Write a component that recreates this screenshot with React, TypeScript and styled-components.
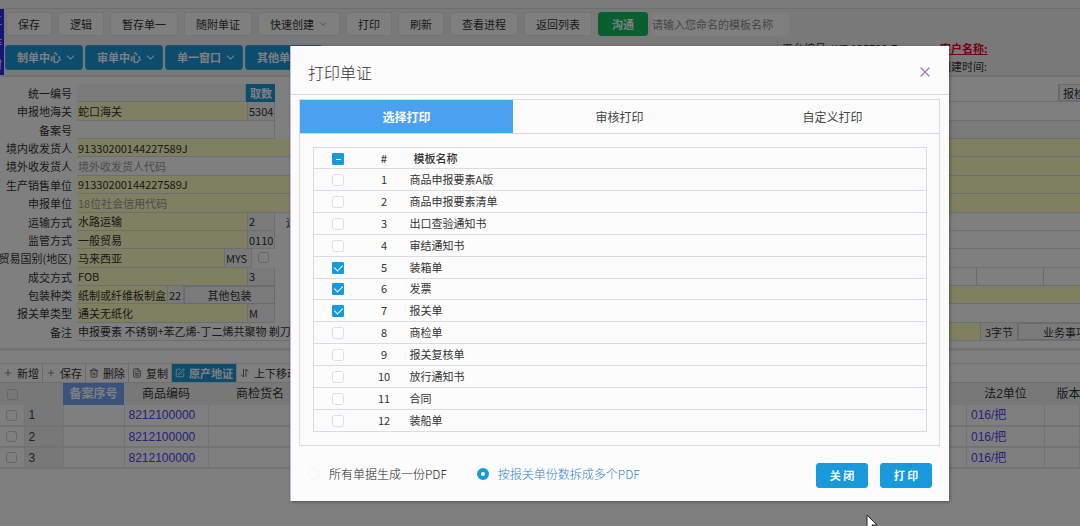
import React, { useEffect, useRef, useState } from "react";
import styled, { createGlobalStyle, css } from "styled-components";
import { ChevronDown, Plus, Trash2, FileText, SquarePen, X } from "lucide-react";

const GlobalStyle = createGlobalStyle`
  * { box-sizing: border-box; }
  body {
    margin: 0;
    overflow: hidden;
    background: #fff;
    color: #333;
    font: 11px/18px "Noto Sans CJK SC", sans-serif;
  }
  button, input {
    margin: 0;
    font: inherit;
    color: inherit;
    border-radius: 0;
  }
  button { cursor: pointer; }
`;

const Page = styled.div`
  position: relative;
  min-height: 100vh;
  overflow: hidden;
  background: #fff;
`;

/* ---------- header ---------- */

const TopStrip = styled.div`
  height: 9px;
  background: #f4f4f4;
  border-bottom: 1px solid #dcdcdc;
`;

const Header = styled.header`
  display: flex;
  height: 68px;
  background: #f2f2f2;
  border-bottom: 2px solid #e2e2e2;
`;

const SideTab = styled.nav`
  display: flex;
  flex-direction: column;
  align-items: flex-end;
  justify-content: space-around;
  flex: none;
  width: 4px;
  margin-right: 1px;
  overflow: hidden;
  padding-right: 2px;
  color: #fff;
  background: #2c2cf4;
`;

const HeaderRows = styled.div`
  flex: 1;
  min-width: 0;
`;

const ActionRow = styled.div`
  display: flex;
  align-items: center;
  gap: 6px;
  height: 30px;
  padding-left: 1px;
`;

const ActionButton = styled.button<{ $accent?: boolean }>`
  display: flex;
  align-items: center;
  gap: 4px;
  height: 24px;
  padding: 0 11px;
  border: 1px solid #e6e6e6;
  border-radius: 3px;
  background: #fff;
  white-space: nowrap;
  ${(p) =>
    p.$accent &&
    css`
      padding: 0 13px;
      margin-right: -3px;
      color: #fff;
      font-weight: 700;
      background: #13bf5e;
      border-color: #13bf5e;
    `}
`;

const TemplateInput = styled.input`
  width: 138px;
  height: 24px;
  padding: 0;
  border: 1px solid #f8f8f8;
  border-radius: 3px;
  background: #fff;
  &::placeholder { color: #8c8c8c; }
`;

const MenuRow = styled.div`
  display: flex;
  align-items: center;
  gap: 2px;
  height: 36px;
`;

const MenuButton = styled.button`
  display: flex;
  align-items: center;
  justify-content: center;
  gap: 3px;
  width: 78px;
  height: 25px;
  padding: 0 0 0 6px;
  border: 1px solid #3aa6e0;
  border-radius: 3px;
  color: #fff;
  font-weight: 700;
  background: #1899db;
`;

const OrderInfo = styled.dl`
  display: grid;
  grid-template-columns: 158px 1fr;
  width: 303px;
  height: 36px;
  margin: 0 0 0 auto;
  padding-left: 4px;
  border-left: 1px solid #d4d4d4;
`;

const InfoItem = styled.dt`
  white-space: nowrap;
`;

const CustomerLink = styled.a`
  color: #f00028;
  font-weight: 700;
`;

/* ---------- form ---------- */

const Form = styled.form`
  display: grid;
  grid-template-rows: repeat(14, 1fr);
  height: 274px;
  padding: 7px 0;
  border-bottom: 3px solid #e6e6e6;
`;

const FormRow = styled.div`
  display: grid;
  grid-template-columns: 77px 198px 1fr 131px;
  min-height: 0;
`;

const FieldLabel = styled.label`
  padding-right: 5px;
  text-align: right;
  white-space: nowrap;
  justify-self: end;
`;

const FieldGroup = styled.div<{ $wide?: boolean }>`
  display: flex;
  min-width: 0;
  overflow: hidden;
  grid-column: ${(p) => (p.$wide ? "2 / 4" : "auto")};
`;

type Tone = "yellow" | "gray" | "white";
const tones: Record<Tone, string> = { yellow: "#ffffc2", gray: "#f4f4f4", white: "#fff" };

const Field = styled.input<{ $tone: Tone; $width?: number }>`
  flex: ${(p) => (p.$width ? "none" : "1")};
  width: ${(p) => (p.$width ? `${p.$width}px` : "auto")};
  min-width: 0;
  height: 100%;
  padding: 0 1px;
  border: solid #dcdcdc;
  border-width: 0 1px 1px 0;
  background: ${(p) => tones[p.$tone]};
  &::placeholder { color: #999; }
`;

const FieldButton = styled.button<{ $primary?: boolean }>`
  flex: 1 0 auto;
  height: 100%;
  padding: 0 3px;
  border: 1px solid #c9d6e6;
  line-height: 16px;
  background: #f6f6f6;
  white-space: nowrap;
  ${(p) =>
    p.$primary &&
    css`
      color: #fff;
      font-weight: 700;
      background: #1899db;
      border-color: #1899db;
    `}
`;

const WideButton = styled(FieldButton)`
  padding: 0 24px;
`;

const Tick = styled.input`
  appearance: none;
  flex: none;
  display: block;
  width: 11px;
  height: 11px;
  border: 1px solid #ccc;
  border-radius: 3px;
`;

const InlineTick = styled(Tick)`
  margin: 3px 0 0 6px;
`;

const MidLabel = styled.div`
  padding-left: 11px;
  white-space: nowrap;
`;

const EdgeCell = styled.div<{ $tone: Tone }>`
  display: flex;
  min-width: 0;
  overflow: hidden;
  border-bottom: 1px solid #dcdcdc;
  background: ${(p) => tones[p.$tone]};
`;

const EdgeBox = styled.div<{ $width: number; $tone?: Tone }>`
  flex: none;
  width: ${(p) => p.$width}px;
  border-right: 1px solid #d4d4d4;
  text-align: center;
  background: ${(p) => tones[p.$tone ?? "white"]};
`;

/* ---------- goods list ---------- */

const Toolbar = styled.div`
  display: flex;
  height: 20px;
  margin-top: 12px;
  border: solid #dcdcdc;
  border-width: 1px 0;
`;

const ToolButton = styled.button<{ $primary?: boolean }>`
  display: flex;
  align-items: center;
  gap: 4px;
  padding: 0 3px;
  border: 0;
  border-right: 1px solid #d8d8d8;
  background: #fff;
  white-space: nowrap;
  svg { flex: none; }
  ${(p) =>
    p.$primary &&
    css`
      color: #fff;
      font-weight: 700;
      background: #1899db;
    `}
`;

const GoodsTable = styled.table`
  width: 100%;
  table-layout: fixed;
  border-collapse: collapse;
  font: 12px/18px "Liberation Sans", "Noto Sans CJK SC", sans-serif;
`;

const GoodsHead = styled.th<{ $active?: boolean }>`
  height: 22px;
  padding: 0;
  overflow: hidden;
  white-space: nowrap;
  font-weight: ${(p) => (p.$active ? 700 : 400)};
  color: ${(p) => (p.$active ? "#fff" : "#333")};
  background: ${(p) => (p.$active ? "#73a6fa" : "#f0f0f0")};
  &:last-child { padding-left: 12px; text-align: left; }
  ${Tick} { margin: 0 auto; }
`;

const GoodsCell = styled.td<{ $index?: boolean }>`
  height: 21px;
  padding: 0 4px;
  overflow: hidden;
  white-space: nowrap;
  border: solid #e6e6e6;
  border-width: 0 1px 2px 0;
  color: ${(p) => (p.$index ? "#444" : "#4a44f4")};
  background: ${(p) => (p.$index ? "#f0f0f0" : "#fff")};
  ${Tick} { margin: 0 auto; }
`;

/* ---------- dialog ---------- */

const Overlay = styled.div`
  position: absolute;
  inset: 0;
  background: rgba(0, 0, 0, 0.5);
`;

const Dialog = styled.section`
  margin: 46px 131px 0 290px;
  border-left: 1px solid #c9b3e0;
  background: #fcfcfc;
  box-shadow: 1px 1px 3px rgba(0, 0, 0, 0.35);
`;

const DialogHeader = styled.header`
  display: flex;
  align-items: center;
  justify-content: space-between;
  height: 49px;
  padding: 4px 16px 0 17px;
  border-bottom: 1px solid #dcdcdc;
`;

const DialogTitle = styled.h1`
  margin: 0;
  font-size: 16px;
  line-height: 24px;
  font-weight: 300;
`;

const CloseButton = styled.button`
  display: flex;
  padding: 0;
  border: 0;
  background: none;
  color: #a284c6;
`;

const TabPanel = styled.div`
  margin: 4px 9px 0 8px;
  border: 1px solid #dedae6;
`;

const TabList = styled.div`
  display: grid;
  grid-template-columns: repeat(3, 1fr);
  height: 34px;
  border-bottom: 1px solid #dad2ea;
`;

const Tab = styled.button<{ $active?: boolean }>`
  border: 0;
  font-size: 12px;
  color: ${(p) => (p.$active ? "#fff" : "#444")};
  font-weight: ${(p) => (p.$active ? 700 : 400)};
  background: ${(p) => (p.$active ? "#4ba0f0" : "none")};
`;

const TemplateArea = styled.div`
  padding: 13px 12px 13px 13px;
`;

const TemplateTable = styled.table`
  width: 100%;
  height: 285px;
  table-layout: fixed;
  border-collapse: collapse;
  th, td {
    height: 21px;
    padding: 0 0 1px;
    border: solid #dedae6;
    border-width: 1px 0;
    text-align: center;
    font-weight: 400;
    line-height: 18px;
  }
  th { font-weight: 500; }
  tr > :first-child {
    padding: 1px 0 0;
    border-left-width: 1px;
  }
  tr > :last-child {
    padding-left: 3px;
    border-right-width: 1px;
    text-align: left;
  }
  thead tr > :last-child { padding-left: 7px; }
`;

const PrintTick = styled.input`
  appearance: none;
  position: relative;
  display: block;
  width: 12px;
  height: 12px;
  margin: 0 auto;
  border: 1px solid #e2dcea;
  border-radius: 3px;
  background: #fff;
  &:checked, &:indeterminate {
    border-color: #1899db;
    border-radius: 1px;
    background: #1899db;
  }
  &:checked::after {
    content: "";
    position: absolute;
    left: 3px;
    top: 0;
    width: 4px;
    height: 7px;
    border: solid #fff;
    border-width: 0 1px 1px 0;
    transform: rotate(45deg);
  }
  &:indeterminate::after {
    content: "";
    position: absolute;
    left: 3px;
    top: 5px;
    width: 5px;
    height: 1px;
    background: #fff;
  }
`;

const DialogFooter = styled.footer`
  display: flex;
  align-items: center;
  height: 55px;
  padding: 0 17px;
`;

const RadioLabel = styled.label<{ $active?: boolean }>`
  display: flex;
  align-items: center;
  gap: 9px;
  margin-right: 30px;
  font-size: 12px;
  font-weight: 300;
  white-space: nowrap;
  color: ${(p) => (p.$active ? "#2c82d2" : "#222")};
`;

const Radio = styled.input`
  appearance: none;
  width: 12px;
  height: 12px;
  border: 1px dotted #eee;
  border-radius: 50%;
  &:checked {
    border: 4px solid #1899db;
    background: #fff;
  }
`;

const DialogActions = styled.div`
  display: flex;
  gap: 12px;
  margin: 3px 0 0 auto;
`;

const DialogButton = styled.button`
  width: 52px;
  height: 25px;
  padding: 0;
  border: 1px solid #1899db;
  border-radius: 3px;
  color: #fff;
  font-weight: 700;
  background: #1899db;
`;

const Pointer = styled.svg`
  position: absolute;
  left: 866px;
  top: 514px;
`;

/* ---------- data ---------- */

const actions = ["保存", "逻辑", "暂存单一", "随附单证", "快速创建", "打印", "刷新", "查看进程", "返回列表"];
const menus = ["制单中心", "审单中心", "单一窗口", "其他单证"];

interface Part {
  value?: string;
  hint?: string;
  tone?: Tone;
  width?: number;
  button?: boolean;
  primary?: boolean;
  tick?: boolean;
}

interface RowSpec {
  label: string;
  parts: Part[];
  wide?: boolean;
  mid?: string;
  edge?: Tone;
}

const coded = (value: string, code: string): Part[] => [
  { value, tone: "yellow", width: 171 },
  { value: code, tone: "gray" },
];

const formRows: RowSpec[] = [
  { label: "统一编号", parts: [{ value: "", tone: "gray", width: 169 }, { value: "取数", button: true, primary: true }] },
  { label: "申报地海关", parts: coded("蛇口海关", "5304") },
  { label: "备案号", parts: [{ value: "" }], edge: "gray" },
  { label: "境内收发货人", parts: [{ value: "91330200144227589J", tone: "yellow" }], wide: true, edge: "yellow" },
  { label: "境外收发货人", parts: [{ hint: "境外收发货人代码" }], wide: true, edge: "yellow" },
  { label: "生产销售单位", parts: [{ value: "91330200144227589J", tone: "yellow" }], wide: true, edge: "yellow" },
  { label: "申报单位", parts: [{ hint: "18位社会信用代码", tone: "yellow" }], wide: true, edge: "yellow" },
  { label: "运输方式", parts: coded("水路运输", "2"), mid: "运输工具" },
  { label: "监管方式", parts: coded("一般贸易", "0110") },
  {
    label: "贸易国别(地区)",
    parts: [{ value: "马来西亚", tone: "yellow", width: 148 }, { value: "MYS", tone: "gray", width: 27 }, { tick: true }],
  },
  { label: "成交方式", parts: coded("FOB", "3") },
  {
    label: "包装种类",
    parts: [
      { value: "纸制或纤维板制盒/箱", tone: "yellow", width: 91 },
      { value: "22", tone: "gray", width: 16 },
      { value: "其他包装", button: true },
    ],
    edge: "yellow",
  },
  { label: "报关单类型", parts: coded("通关无纸化", "M") },
  { label: "备注", parts: [{ value: "申报要素 不锈钢+苯乙烯-丁二烯共聚物 剃刀 剃须刀" }], wide: true },
];

const templates = [
  "商品申报要素A版", "商品申报要素清单", "出口查验通知书", "审结通知书", "装箱单", "发票",
  "报关单", "商检单", "报关复核单", "放行通知书", "合同", "装船单",
];

const tabs = ["选择打印", "审核打印", "自定义打印"];

const MoveIcon = () => (
  <svg width="10" height="10" viewBox="0 0 10 10" fill="none" stroke="#666" aria-hidden="true">
    <path d="M3.5 1v8L1 6.5M6 9V1l2.500 2.500" />
  </svg>
);

function Edge({ index, tone }: { index: number; tone: Tone }) {
  return (
    <EdgeCell $tone={tone}>
      {index === 0 && (
        <>
          <EdgeBox $width={110} />
          <FieldButton type="button">报检信息</FieldButton>
        </>
      )}
      {index === 10 && (
        <>
          <EdgeBox $width={28} />
          <EdgeBox $width={67} />
        </>
      )}
      {index === 13 && (
        <>
          <EdgeBox $width={32} $tone="yellow" />
          <EdgeBox $width={37} $tone="gray">3字节</EdgeBox>
          <WideButton type="button">业务事项</WideButton>
        </>
      )}
    </EdgeCell>
  );
}

function DeclarationForm() {
  return (
    <Form>
      {formRows.map((row, i) => (
        <FormRow key={row.label}>
          <FieldLabel htmlFor={`field-${i}`}>{row.label}</FieldLabel>
          <FieldGroup $wide={row.wide}>
            {row.parts.map((part, j) => {
              if (part.tick) return <InlineTick key={j} type="checkbox" aria-label="贸易国别" />;
              if (part.button)
                return (
                  <FieldButton key={j} type="button" $primary={part.primary}>
                    {part.value}
                  </FieldButton>
                );
              return (
                <Field
                  key={j}
                  id={j === 0 ? `field-${i}` : undefined}
                  aria-label={j === 0 ? undefined : `${row.label}代码`}
                  $tone={part.tone ?? "white"}
                  $width={part.width}
                  defaultValue={part.value}
                  placeholder={part.hint}
                />
              );
            })}
          </FieldGroup>
          {!row.wide && <MidLabel>{row.mid}</MidLabel>}
          <Edge index={i} tone={row.edge ?? "white"} />
        </FormRow>
      ))}
    </Form>
  );
}

function GoodsList() {
  return (
    <>
      <Toolbar>
        <ToolButton><Plus size={10} color="#777" />新增</ToolButton>
        <ToolButton><Plus size={10} color="#777" />保存</ToolButton>
        <ToolButton><Trash2 size={10} color="#555" />删除</ToolButton>
        <ToolButton><FileText size={10} color="#555" />复制</ToolButton>
        <ToolButton $primary><SquarePen size={10} />原产地证</ToolButton>
        <ToolButton><MoveIcon />上下移动</ToolButton>
      </Toolbar>
      <GoodsTable>
        <colgroup>
          <col width="24" /><col width="39" /><col width="61" /><col width="84" /><col width="104" />
          <col /><col width="78" /><col width="35" />
        </colgroup>
        <thead>
          <tr>
            <GoodsHead><Tick type="checkbox" aria-label="全选" /></GoodsHead>
            <GoodsHead />
            <GoodsHead $active>备案序号</GoodsHead>
            <GoodsHead>商品编码</GoodsHead>
            <GoodsHead>商检货名</GoodsHead>
            <GoodsHead />
            <GoodsHead>法2单位</GoodsHead>
            <GoodsHead>版本号</GoodsHead>
          </tr>
        </thead>
        <tbody>
          {[1, 2, 3].map((n) => (
            <tr key={n}>
              <GoodsCell><Tick type="checkbox" aria-label={`第${n}行`} /></GoodsCell>
              <GoodsCell $index>{n}</GoodsCell>
              <GoodsCell />
              <GoodsCell>8212100000</GoodsCell>
              <GoodsCell />
              <GoodsCell />
              <GoodsCell>016/把</GoodsCell>
              <GoodsCell />
            </tr>
          ))}
        </tbody>
      </GoodsTable>
    </>
  );
}

function PrintDialog() {
  const [tab, setTab] = useState(0);
  const [picked, setPicked] = useState<number[]>([4, 5, 6]);
  const [mode, setMode] = useState("split");
  const all = useRef<HTMLInputElement>(null);

  useEffect(() => {
    if (all.current) all.current.indeterminate = picked.length > 0 && picked.length < templates.length;
  }, [picked]);

  const toggle = (i: number) =>
    setPicked((list) => (list.includes(i) ? list.filter((n) => n !== i) : [...list, i]));

  return (
    <Dialog role="dialog" aria-labelledby="print-title">
      <DialogHeader>
        <DialogTitle id="print-title">打印单证</DialogTitle>
        <CloseButton aria-label="关闭"><X size={16} strokeWidth={2} /></CloseButton>
      </DialogHeader>
      <TabPanel>
        <TabList role="tablist">
          {tabs.map((name, i) => (
            <Tab key={name} role="tab" aria-selected={tab === i} $active={tab === i} onClick={() => setTab(i)}>
              {name}
            </Tab>
          ))}
        </TabList>
        <TemplateArea>
          <TemplateTable>
            <colgroup><col width="48" /><col width="45" /><col /></colgroup>
            <thead>
              <tr>
                <th>
                  <PrintTick
                    ref={all}
                    type="checkbox"
                    aria-label="全选模板"
                    checked={picked.length === templates.length}
                    onChange={(e) => setPicked(e.target.checked ? templates.map((_, i) => i) : [])}
                  />
                </th>
                <th>#</th>
                <th>模板名称</th>
              </tr>
            </thead>
            <tbody>
              {templates.map((name, i) => (
                <tr key={name}>
                  <td>
                    <PrintTick type="checkbox" aria-label={name} checked={picked.includes(i)} onChange={() => toggle(i)} />
                  </td>
                  <td>{i + 1}</td>
                  <td>{name}</td>
                </tr>
              ))}
            </tbody>
          </TemplateTable>
        </TemplateArea>
      </TabPanel>
      <DialogFooter>
        <RadioLabel>
          <Radio type="radio" name="mode" checked={mode === "single"} onChange={() => setMode("single")} />
          所有单据生成一份PDF
        </RadioLabel>
        <RadioLabel $active>
          <Radio type="radio" name="mode" checked={mode === "split"} onChange={() => setMode("split")} />
          按报关单份数拆成多个PDF
        </RadioLabel>
        <DialogActions>
          <DialogButton>关 闭</DialogButton>
          <DialogButton>打 印</DialogButton>
        </DialogActions>
      </DialogFooter>
    </Dialog>
  );
}

export default function App() {
  return (
    <Page>
      <GlobalStyle />
      <TopStrip />
      <Header>
        <SideTab>
          <span>工</span>
          <span>作</span>
          <span>材</span>
        </SideTab>
        <HeaderRows>
          <ActionRow>
            {actions.map((name) => (
              <ActionButton key={name}>
                {name}
                {name === "快速创建" && <ChevronDown size={10} color="#888" />}
              </ActionButton>
            ))}
            <ActionButton $accent>沟通</ActionButton>
            <TemplateInput aria-label="模板名称" placeholder="请输入您命名的模板名称" />
          </ActionRow>
          <MenuRow>
            {menus.map((name) => (
              <MenuButton key={name}>
                {name}
                <ChevronDown size={13} />
              </MenuButton>
            ))}
            <OrderInfo>
              <InfoItem>平台编号: WT-135700-7</InfoItem>
              <InfoItem><CustomerLink href="#">客户名称:</CustomerLink></InfoItem>
              <InfoItem />
              <InfoItem>创建时间:</InfoItem>
            </OrderInfo>
          </MenuRow>
        </HeaderRows>
      </Header>
      <DeclarationForm />
      <GoodsList />
      <Overlay>
        <PrintDialog />
      </Overlay>
      <Pointer width="12" height="18" viewBox="0 0 12 18" aria-hidden="true">
        <path d="M1 1v14l3-3 2 5 2-1-2-5h5z" fill="#fff" stroke="#222" />
      </Pointer>
    </Page>
  );
}
